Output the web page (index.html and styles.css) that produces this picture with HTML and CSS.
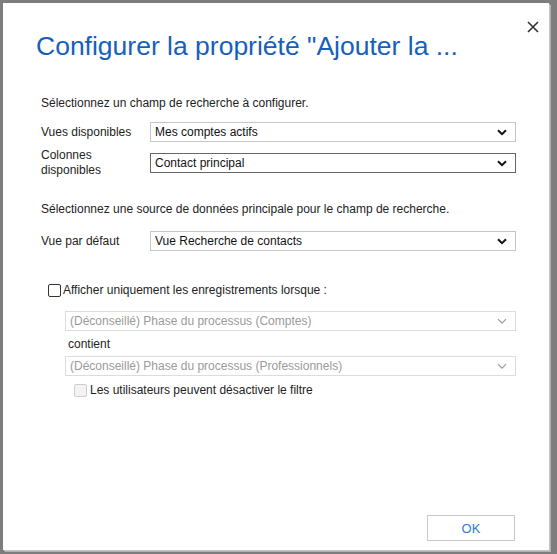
FILE: index.html
```html
<!DOCTYPE html>
<html lang="fr">
<head>
<meta charset="utf-8">
<title>Configurer la propriété</title>
<link rel="stylesheet" href="styles.css">
</head>
<body>
<div class="dialog">
  <button class="close" aria-label="Fermer">
    <svg width="12" height="12" viewBox="0 0 12 12"><path d="M1 1 L11 11 M11 1 L1 11" stroke="#333" stroke-width="1.6" fill="none"/></svg>
  </button>
  <h1 class="title">Configurer la propriété "Ajouter la ...</h1>
  <div class="content">
    <p class="intro">Sélectionnez un champ de recherche à configurer.</p>
    <div class="row row-first">
      <label class="lbl">Vues disponibles</label>
      <div class="select"><span>Mes comptes actifs</span><svg class="chev" width="10" height="7" viewBox="0 0 10 7"><path d="M1 1.2 L5 5.2 L9 1.2" stroke="#111" stroke-width="2" fill="none"/></svg></div>
    </div>
    <div class="row row-tall">
      <label class="lbl">Colonnes disponibles</label>
      <div class="select focus"><span>Contact principal</span><svg class="chev" width="10" height="7" viewBox="0 0 10 7"><path d="M1 1.2 L5 5.2 L9 1.2" stroke="#111" stroke-width="2" fill="none"/></svg></div>
    </div>
    <p class="intro intro2">Sélectionnez une source de données principale pour le champ de recherche.</p>
    <div class="row row-first">
      <label class="lbl">Vue par défaut</label>
      <div class="select"><span>Vue Recherche de contacts</span><svg class="chev" width="10" height="7" viewBox="0 0 10 7"><path d="M1 1.2 L5 5.2 L9 1.2" stroke="#111" stroke-width="2" fill="none"/></svg></div>
    </div>
    <label class="check check-main"><span class="box"></span>Afficher uniquement les enregistrements lorsque :</label>
    <div class="filter">
      <div class="select disabled"><span>(Déconseillé) Phase du processus (Comptes)</span><svg class="chev" width="10" height="7" viewBox="0 0 10 7"><path d="M1 1.2 L5 5.2 L9 1.2" stroke="#999" stroke-width="1.2" fill="none"/></svg></div>
      <div class="contient">contient</div>
      <div class="select disabled"><span>(Déconseillé) Phase du processus (Professionnels)</span><svg class="chev" width="10" height="7" viewBox="0 0 10 7"><path d="M1 1.2 L5 5.2 L9 1.2" stroke="#999" stroke-width="1.2" fill="none"/></svg></div>
      <label class="check check-sub"><span class="box box-disabled"></span>Les utilisateurs peuvent désactiver le filtre</label>
    </div>
  </div>
  <div class="footer">
    <button class="ok">OK</button>
  </div>
</div>
</body>
</html>
```

FILE: styles.css
```css
html, body {
  margin: 0;
  padding: 0;
}
body {
  width: 557px;
  height: 554px;
  background: #7d7d7d;
  padding: 3px 0 0 3px;
  box-sizing: border-box;
  font-family: "Segoe UI", "Liberation Sans", Arial, sans-serif;
  font-size: 12px;
  color: #222;
}
.dialog {
  position: relative;
  width: 546px;
  height: 547px;
  background: #fff;
  box-shadow: 1px 1px 0 #c4c4c4, 2px 2px 0 #b0b0b0;
  display: flex;
  flex-direction: column;
  box-sizing: border-box;
}
.close {
  position: absolute;
  top: 18px;
  left: 524px;
  width: 12px;
  height: 12px;
  padding: 0;
  border: 0;
  background: transparent;
  display: flex;
}
.title {
  margin: 26px 0 0 33px;
  font-weight: normal;
  font-size: 26.5px;
  line-height: 34px;
  color: #1660bc;
  white-space: nowrap;
}
.content {
  padding: 0 33px 0 38px;
  flex: 1;
}
.intro {
  margin: 32px 0 0;
  line-height: 16px;
}
.intro2 {
  margin-top: 23px;
}
.row {
  display: flex;
  align-items: center;
}
.row-first {
  margin-top: 11px;
}
.intro2 + .row-first {
  margin-top: 14px;
}
.row-tall {
  margin-top: 6px;
  height: 30px;
}
.lbl {
  width: 109px;
  flex: none;
  line-height: 15px;
}
.select {
  flex: 1;
  height: 20px;
  box-sizing: border-box;
  border: 1px solid #c6c6c6;
  display: flex;
  align-items: center;
  justify-content: space-between;
  padding: 0 8px 0 4px;
  color: #111;
  background: #fff;
}
.select.focus {
  border-color: #666;
}
.select.disabled {
  border-color: #dcdcdc;
  color: #9a9a9a;
}
.chev {
  flex: none;
}
.check {
  display: flex;
  align-items: center;
  line-height: 16px;
}
.check-main {
  margin: 31px 0 0 7px;
}
.box {
  width: 11px;
  height: 11px;
  border: 1px solid #333;
  border-radius: 2px;
  margin-right: 2px;
  flex: none;
  background: #fff;
}
.box-disabled {
  border-color: #cfcfcf;
  background: #f3f3f3;
  margin-right: 3px;
}
.filter {
  margin: 13px 0 0 24px;
}
.contient {
  margin: 5px 0 4px 3px;
  line-height: 16px;
}
.check-sub {
  margin: 6px 0 0 9px;
}
.footer {
  display: flex;
  justify-content: flex-end;
  padding: 0 34px 9px 0;
}
.ok {
  width: 88px;
  height: 26px;
  border: 1px solid #c8c8c8;
  background: #fff;
  color: #2f7ad6;
  font-family: "Segoe UI", "Liberation Sans", Arial, sans-serif;
  font-size: 13px;
  padding: 0;
}
```
